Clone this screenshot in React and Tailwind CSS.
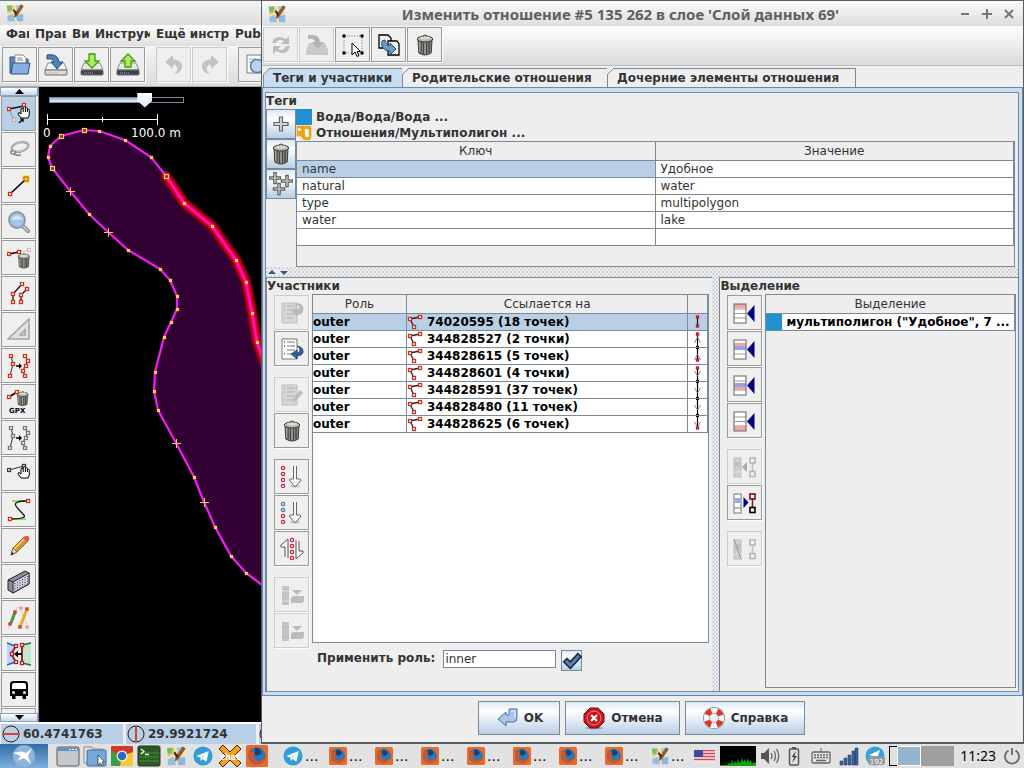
import React, { useState } from "react";
import clsx from "clsx";

// ---------- small drawing helpers ----------

const Node = ({ x, y, c = "#c8321e", s = 3 }) => (
  <rect x={x - s / 2} y={y - s / 2} width={s} height={s} fill="#fff" stroke={c} strokeWidth="1.3" />
);

const Svg = ({ children, size = "size-6" }) => (
  <svg viewBox="0 0 24 24" className={clsx("shrink-0", size)} fill="none" aria-hidden="true">
    {children}
  </svg>
);

const TrashShape = () => (
  <g>
    <path d="M5 6.5 L5.8 20 Q12 24 18.2 20 L19 6.5 Z" fill="#84847c" stroke="#3c3c38" />
    <path d="M8 9 V20 M10.7 9.5 V21 M13.4 9.5 V21 M16 9 V20" stroke="#42423e" strokeWidth="1.2" />
    <path d="M6.8 9 V19 M12 9.5 V21" stroke="#c8c8c0" strokeWidth="0.8" />
    <ellipse cx="12" cy="6" rx="7.7" ry="3" fill="#b9b9b1" stroke="#3c3c38" />
    <ellipse cx="12" cy="4.8" rx="5" ry="1.6" fill="#dcdcd4" />
    <path d="M10 3.5 Q12 0.5 14 3.5" stroke="#4c4c48" strokeWidth="1.2" />
  </g>
);

const HandShape = ({ x = 0, y = 0 }) => (
  <path
    transform={`translate(${x} ${y})`}
    d="M3 12 L0 8 Q0 6 2 7 L3 8 V3 Q4 1 5.2 3 V1.4 Q6.4 -.4 7.4 1.4 V2 Q8.6 .6 9.4 2.4 V3.4 Q11 2.4 11.3 4.2 V9 L10 12 Z M5.2 3 V6 M7.4 2 V6 M9.4 3 V6"
    fill="#fff"
    stroke="#000"
    strokeWidth="1"
  />
);

const TrashIcon = () => (
  <Svg>
    <TrashShape />
  </Svg>
);

const JosmLogo = ({ size = "size-[18px]" }) => (
  <Svg size={size}>
    <path d="M1 2 L22 1 L23 23 L2 23 Z" fill="#ebe6b4" />
    <path d="M1 2 L9 2 L7 9 L2 10 Z" fill="#78be66" />
    <path d="M13 15 L23 13 V23 H15 Z" fill="#8cb8e6" />
    <path d="M2 16 L9 13 L12 23 H2 Z" fill="#94bce8" />
    <path d="M13 2 L20 1 L14 9 Z" fill="#9ecbe9" />
    <path d="M2 12 L11 8 M8 2 L12 13" stroke="#f3b25c" strokeWidth="1.6" />
    <path d="M11 18 L12 13 L20 1 L23 3 L15 15 Z" fill="#a3572a" stroke="#6a3214" strokeWidth="0.7" />
    <path d="M9 8 L11 7 L15 12 L13 15 Z" fill="#3a2c26" />
  </Svg>
);

// ---------- map toolbox icons ----------

const SelectIcon = () => (
  <Svg>
    <path d="M2 7 L17 4" stroke="#111" strokeWidth="1.4" />
    <path d="M2 7 L7 19" stroke="#888" strokeWidth="0.8" />
    <Node x={2} y={7} />
    <Node x={17} y={3} />
    <Node x={7} y={18} c="#d9a5ac" />
    <HandShape x={11} y={4} />
    <path d="M12 21 L16 17 M13 17 H16 V20" stroke="#000" strokeWidth="1.2" />
  </Svg>
);
const LassoIcon = () => (
  <Svg>
    <ellipse cx="13" cy="9" rx="8.5" ry="4.6" transform="rotate(-14 13 9)" stroke="#8b8b88" strokeWidth="2.2" />
    <ellipse cx="13" cy="9" rx="8.5" ry="4.6" transform="rotate(-14 13 9)" stroke="#d4d4d0" strokeWidth="0.8" />
    <path d="M6 12 Q2 14 5 16 Q10 16 8 13 M6 16 Q10 18 14 17" stroke="#8b8b88" strokeWidth="1.6" />
  </Svg>
);
const DrawIcon = () => (
  <Svg>
    <rect x="15" y="1" width="8" height="8" fill="#f7e93c" opacity="0.8" />
    <path d="M3 20 L19 5" stroke="#000" strokeWidth="1.6" />
    <Node x={3} y={20} />
    <rect x="17" y="3" width="4" height="4" fill="#f4d95b" stroke="#b4561e" strokeWidth="1.2" />
  </Svg>
);
const ZoomIcon = () => (
  <Svg>
    <path d="M16 16 L21 21" stroke="#8a8a8a" strokeWidth="4" strokeLinecap="round" />
    <path d="M16 16 L21 21" stroke="#d8d8d8" strokeWidth="1.5" strokeLinecap="round" />
    <circle cx="10" cy="10" r="8" fill="#a3c5ec" stroke="#8e969e" strokeWidth="1.8" />
    <path d="M4 9 Q10 2 16 9 Q10 11 4 9" fill="#d3e4f6" />
  </Svg>
);
const DeleteToolIcon = () => (
  <Svg>
    <path d="M2 8 L12 6" stroke="#000" strokeWidth="1.3" />
    <path d="M12 6 L22 4" stroke="#dcc0c0" />
    <Node x={2} y={8} />
    <Node x={12} y={6} />
    <Node x={22} y={4} c="#e2b5b5" />
    <g transform="translate(8 6) scale(.74)">
      <TrashShape />
    </g>
  </Svg>
);
const ParallelIcon = () => (
  <Svg>
    <path d="M6 20 V12 L15 2 M14 20 V13 L20 7" stroke="#111" strokeWidth="1.3" />
    {[[6, 20], [6, 12], [15, 2], [14, 20], [14, 13], [20, 7]].map(([x, y]) => (
      <Node key={`${x}-${y}`} x={x} y={y} />
    ))}
  </Svg>
);
const AngleIcon = () => (
  <Svg>
    <path d="M1 21 L22 1 V21 Z M13 17 L18 12 V17 Z" stroke="#a6a6a6" strokeWidth="1.6" fill="#e2e2e2" />
  </Svg>
);
const ImproveIcon = ({ c }) => (
  <Svg>
    <path d="M4 2 L6 10 L3 22 M18 2 L21 7 L18 12 L16 17 L18 22" stroke="#333" />
    <path d="M9 12 H14" stroke="#000" strokeWidth="1.5" />
    <path d="M12 9 L15 12 L12 15 Z" fill="#000" />
    {[[4, 2], [6, 10], [3, 22], [18, 2], [21, 7], [19, 12], [16, 17], [18, 22]].map(([x, y]) => (
      <Node key={`${x}-${y}`} x={x} y={y} c={c} />
    ))}
  </Svg>
);
const GpxTrashIcon = () => (
  <Svg>
    <path d="M2 7 L10 2" stroke="#000" strokeWidth="1.8" />
    <g transform="translate(7 0) scale(.72)">
      <TrashShape />
    </g>
    <Node x={2} y={7} />
    <Node x={10} y={2} />
    <text x="2" y="23" className="fill-black font-['DejaVu_Sans'] text-[7px] font-bold">
      GPX
    </text>
  </Svg>
);
const MoveIcon = () => (
  <Svg>
    <path d="M2 8 L17 4" stroke="#333" />
    <Node x={2} y={8} c="#1f4a28" />
    <Node x={17} y={4} c="#1f4a28" />
    <HandShape x={11} y={4} />
  </Svg>
);
const SplineIcon = () => (
  <Svg>
    <path d="M5 3 H20 M3 21 H19" stroke="#6fdd35" strokeWidth="1.6" />
    <path d="M20 3 Q6 3 9 8 Q11 11 16 16 Q22 21 3 21" stroke="#111" strokeWidth="1.3" />
    <Node x={21} y={3} />
    <Node x={3} y={21} />
  </Svg>
);
const PencilIcon = () => (
  <Svg>
    <path d="M4 21 L6 14 L17 3 L21 7 L10 18 Z" fill="#d8962f" stroke="#6e4a14" strokeWidth="0.8" />
    <path d="M7 15 L18 4" stroke="#f4cf79" strokeWidth="1.6" />
    <path d="M16 4 Q19 0 22 3 Q23 6 20 8 Z" fill="#e8583f" />
    <path d="M4 21 L6 14 L10 18 Z" fill="#e9d7b0" stroke="#55534a" strokeWidth="0.7" />
    <path d="M4 21 L5 18 L7 20 Z" fill="#222" />
  </Svg>
);
const BuildingIcon = () => (
  <Svg>
    <path d="M1 10 L18 1 L22 3 V14 L6 23 L1 20 Z" fill="#8d8d93" stroke="#26262a" />
    <path d="M6 12 L22 3 V14 L6 23 Z" fill="#cfd0e0" stroke="#26262a" />
    <path d="M8 13 V21 M10.5 12 V20 M13 10 V19 M15.5 9 V17 M18 7 V16 M20.5 6 V15" stroke="#33333a" strokeDasharray="1 1.5" />
    <path d="M1 10 L6 12" stroke="#26262a" />
  </Svg>
);
const TwoWaysIcon = () => (
  <Svg>
    <path d="M1 23 L10 1 M12 1 L22 23" stroke="#ebc9c9" />
    <path d="M4 17 L8 6" stroke="#3aa03c" strokeWidth="3" />
    <path d="M13 21 L20 3" stroke="#e7ac24" strokeWidth="3" />
    <Node x={3} y={18} s={2} />
    <Node x={8} y={6} s={2} />
    <Node x={13} y={21} s={2} />
    <Node x={20} y={3} s={2} />
    <Node x={20} y={21} s={2} c="#dc9a9a" />
    <Node x={14} y={2} s={2} c="#dc9a9a" />
  </Svg>
);
const SplitIcon = () => (
  <Svg>
    <path d="M0 1 L8 4 L3 12 L8 20 L1 23 H0 Z" fill="#bdd5f4" />
    <path d="M15 3 L24 0 V24 L17 22 Z" fill="#bfe8cf" />
    <path d="M0 1 L8 4 M0 23 L8 20" stroke="#2c55e0" strokeWidth="1.6" />
    <path d="M15 3 L24 1 M15 21 L24 23" stroke="#1c7044" strokeWidth="1.6" />
    <path d="M9 4 L4 12 L9 20 M15 3 V21" stroke="#a3262a" strokeWidth="2" />
    <path d="M8 12 H15" stroke="#000" strokeWidth="1.8" />
    <path d="M11 8.5 L7 12 L11 15.5 Z" fill="#000" />
    {[[9, 4], [5, 12], [9, 20], [15, 3], [15, 21]].map(([x, y]) => (
      <Node key={`${x}-${y}`} x={x} y={y} c="#a3262a" />
    ))}
  </Svg>
);
const BusIcon = () => (
  <Svg>
    <path d="M3 6 Q3 3 7 3 H17 Q21 3 21 6 V18 H3 Z" fill="#000" />
    <path d="M5 7 Q5 5 7 5 H17 Q19 5 19 7 V11 H5 Z" fill="#fff" />
    <rect x="5" y="17" width="3.5" height="4" fill="#000" />
    <rect x="15.5" y="17" width="3.5" height="4" fill="#000" />
    <circle cx="6.5" cy="14.5" r="1.5" fill="#fff" />
    <circle cx="17.5" cy="14.5" r="1.5" fill="#fff" />
  </Svg>
);

// ---------- file toolbar icons ----------

const OpenIcon = () => (
  <Svg>
    <path d="M2 4 H9 L10 6 H20 V20 H2 Z" fill="#5a86bd" stroke="#2d5587" />
    <path d="M7 2 H15 L18 5 V14 H7 Z" fill="#fff" stroke="#888" />
    <path d="M9 5 H14 M9 7 H15" stroke="#888" />
    <path d="M5 10 H22 L20 21 H3 Z" fill="#86b0e0" stroke="#2d5587" />
  </Svg>
);
const DriveShape = ({ dark }) => (
  <g>
    <path d="M4 10 H20 L23 17 H1 Z" fill={dark ? "#e6e6e6" : "#f4f4f4"} stroke="#8a8a8a" />
    <rect x="1" y="17" width="22" height="5" rx="1" fill={dark ? "#3e4244" : "#d9d9d9"} stroke="#6b6b6b" />
    <path d="M4 20 H13" stroke="#aaa" strokeDasharray="1 1" />
  </g>
);
const SaveIcon = () => (
  <Svg>
    <DriveShape />
    <path d="M3 2 Q14 0 15 9 H19 L13 16 L7 9 H10 Q9 5 3 6 Z" fill="#4c83b8" stroke="#1f4e80" />
  </Svg>
);
const DownloadIcon = () => (
  <Svg>
    <DriveShape dark />
    <path d="M9 1 H15 V8 H19 L12 15 L5 8 H9 Z" fill="#a9ee5c" stroke="#469a0b" strokeWidth="1.3" />
  </Svg>
);
const UploadIcon = () => (
  <Svg>
    <DriveShape dark />
    <path d="M9 14 H15 V8 H19 L12 1 L5 8 H9 Z" fill="#a9ee5c" stroke="#469a0b" strokeWidth="1.3" />
  </Svg>
);
const UndoIcon = ({ flip }) => (
  <Svg>
    <path
      transform={flip ? "translate(24 0) scale(-1 1)" : undefined}
      d="M3 9 L11 2 V6 Q20 7 20 14 Q19 20 12 21 Q17 17 15 14 Q13 11 11 12 V16 Z"
      fill="#c3c3c3"
    />
  </Svg>
);
const PageZoomIcon = () => (
  <Svg>
    <path d="M3 2 H17 V20 H3 Z" fill="#fff" stroke="#777" />
    <path d="M5 6 H12 M5 9 H10" stroke="#999" />
    <circle cx="13" cy="13" r="6.5" fill="#b9d2ee" stroke="#587fa9" strokeWidth="1.5" />
  </Svg>
);

// ---------- relation editor icons ----------

const RefreshIcon = () => (
  <Svg>
    <path d="M3 10 Q5 3 12 4 L17 6 L20 3 V11 H12 L15 8 Q9 5 7 10 Z M21 13 Q19 21 12 20 L7 18 L4 21 V13 H12 L9 16 Q14 19 17 13 Z" fill="#bcbcbc" />
  </Svg>
);
const ApplyIcon = () => (
  <Svg>
    <path d="M4 10 H20 L23 17 V22 H1 V17 Z" fill="#c9c9c9" />
    <path d="M3 2 Q14 0 15 9 H19 L13 16 L7 9 H10 Q9 5 3 6 Z" fill="#b4b4b4" />
  </Svg>
);
const SelectBoxIcon = () => (
  <Svg>
    <path d="M3 3 H21 V20 H3 Z" stroke="#777" strokeDasharray="1 1.5" />
    {[[3, 3], [21, 3], [3, 20], [21, 20]].map(([x, y]) => (
      <rect key={`${x}-${y}`} x={x - 1.5} y={y - 1.5} width="3" height="3" fill="#000" />
    ))}
    <path d="M11 10 V22 L14 19 L16 23.5 L18 22.5 L16 18.5 H19.5 Z" fill="#fff" stroke="#000" />
  </Svg>
);
const CopyIcon = () => (
  <Svg>
    <path d="M2 2 H11 L14 5 V15 H2 Z" fill="#eee" stroke="#000" strokeWidth="1.3" />
    <path d="M11 8 H20 L22 11 V22 H11 Z" fill="#f5f5f5" stroke="#000" strokeWidth="1.3" />
    <path d="M5 8 Q3 17 13 18 V22 L19 16 L13 10 V13 Q9 13 8 7 Z" fill="#6f9dcb" stroke="#27486e" />
  </Svg>
);
const PlusShape = ({ x, y, s = 1 }) => (
  <path
    transform={`translate(${x} ${y}) scale(${s})`}
    d="M-1.5 -7 H1.5 V-1.5 H7 V1.5 H1.5 V7 H-1.5 V1.5 H-7 V-1.5 H-1.5 Z"
    fill="#d6d8d2"
    stroke="#5f625e"
    strokeWidth={1.2 / s}
  />
);
const AddTagIcon = () => (
  <Svg>
    <PlusShape x={12} y={12} s={1} />
  </Svg>
);
const PasteTagsIcon = () => (
  <Svg>
    <PlusShape x={6} y={6} s={0.8} />
    <PlusShape x={18} y={9} s={0.8} />
    <PlusShape x={10} y={17} s={0.8} />
  </Svg>
);
const MultipolygonIcon = () => (
  <Svg size="size-4">
    <path d="M1 1 H20 Q23 1 23 4 V20 L20 23 H12 L7 17 H1 Z" fill="#eda413" />
    <path d="M13 7 Q16 4 19 7 V18 H14 Z M3 5 H7 V9 H3 Z" fill="#fff" />
  </Svg>
);

const SheetIcon = ({ active, edit }) => (
  <Svg>
    <path d="M2 2 H17 V22 H2 Z" fill={active ? "#fff" : "#d6d6d6"} stroke={active ? "#777" : "#c0c0c0"} />
    <path d="M7 5 H15 M7 9 H15 M7 13 H15 M7 17 H13" stroke={active ? "#777" : "#b4b4b4"} />
    <path d="M4 5 H5 M4 9 H5 M4 17 H5" stroke={active ? "#d22" : "#b4b4b4"} strokeWidth="1.6" />
    {edit && <path d="M12 17 L20 7 L23 10 L15 19 Z" fill="#bdbdbd" />}
    {!edit && !active && <path d="M12 10 L17 5 V8 Q20 9 19 5 L14 3 Q22 0 23.500 8 Q23 14 17 14 V16 Z" fill="#bababa" />}
    {active && <path d="M17 9 Q24 10 23 16 Q21 19 17 19 V22 L11 17 L17 13 V16 Q20 16 20 13 Q20 10 17 9 Z" fill="#2f5f9d" stroke="#173a6c" strokeWidth="0.7" />}
  </Svg>
);

const Dots = ({ x, colors }) =>
  colors.map((c, i) => <circle key={i} cx={x} cy={3 + i * 6} r="1.6" stroke={c} strokeWidth="1.3" fill="#fff" />);
const RED = "#d0213c";
const BLUE = "#4a72b0";

const SortIcon = ({ colors }) => (
  <Svg>
    <Dots x={3} colors={colors} />
    <ellipse cx="15" cy="21" rx="5" ry="1.500" fill="#ccc" />
    <path d="M13.500 1 V14 H10.500 Q8.500 14 10 16 L15 22 L20.500 16 Q21.500 14 19.500 14 H16.500 V1" fill="#f6f6f6" stroke="#666" />
  </Svg>
);
const ReverseIcon = () => (
  <Svg>
    <Dots x={12} colors={[RED, RED, RED, RED]} />
    <path d="M8 21 V2 L1 8 Q0 11 4 10 H5 V20" fill="#f6f6f6" stroke="#555" />
    <path d="M16 3 V22 L23 16 Q24 13 21 14 H19 V4" fill="#f6f6f6" stroke="#555" />
  </Svg>
);
const DownloadMemberIcon = ({ solid }) => (
  <Svg>
    <rect x="2" y="3" width="7" height="19" fill="#c4c4c4" />
    <path d="M2 8 H9 M2 18 H9" stroke={solid ? "#b4b4b4" : "#dedede"} />
    <path d="M12 7 H22 L17 12 Z M13 13 H24 V18 L22 20 H11 V15 Z" fill="#bcbcbc" />
  </Svg>
);

const INSERT_BANDS = {
  top: [[3, 4, "#f3a5a5"]],
  before: [[6, 3, "#f3a5a5"], [9, 4, "#98a2e6"]],
  after: [[10, 4, "#98a2e6"], [14, 3, "#f3a5a5"]],
  bottom: [[17, 5, "#f3a5a5"]],
};
const InsertIcon = ({ kind }) => (
  <Svg>
    <rect x="1" y="3" width="12" height="19" fill="#fff" />
    <path d="M1 8 H13 M1 12.500 H13 M1 17 H13" stroke="#999" />
    {INSERT_BANDS[kind].map(([y, h, c]) => (
      <rect key={y} x="1" y={y} width="12" height={h} fill={c} />
    ))}
    <rect x="1" y="3" width="12" height="19" stroke="#666" />
    <path d="M14 12.500 L21.500 4 V21 Z" fill="#00007f" />
  </Svg>
);
const ChainIcon = ({ active, strike, toLeft }) => (
  <Svg>
    <rect x="1" y="3" width="7" height="19" fill={active ? "#fff" : "#cfcfcf"} stroke={active ? "#777" : "#bdbdbd"} />
    <rect x="1.5" y="7" width="6" height="5" fill={active ? "#8fa8f0" : "#c0c0c0"} />
    <path d="M1 17 H8" stroke={active ? "#777" : "#dedede"} />
    {toLeft && <path d="M9 12 L14 7 V17 Z" fill="#aaa" />}
    {active && <path d="M10.500 6 L15.500 11.500 L10.500 17 Z" fill="#00007f" />}
    {strike && <path d="M1 2 L8 22" stroke="#999" />}
    <path d="M19.500 8 V17" stroke={active ? "#9a1420" : "#c2c2c2"} strokeWidth="1.6" />
    <rect x="17" y="3" width="5" height="5" fill="#f4f4f4" stroke={active ? "#7a0c14" : "#b6b6b6"} strokeWidth="1.6" />
    <rect x="17" y="16.500" width="5" height="5" fill="#f4f4f4" stroke={active ? "#000" : "#b6b6b6"} strokeWidth="1.6" />
  </Svg>
);
const WayIcon = () => (
  <svg viewBox="0 0 16 16" className="size-4 shrink-0" fill="none" aria-hidden="true">
    <path d="M3 5 L13 3 M3 5 L7 13" stroke="#222" strokeWidth="1.300" />
    <Node x={3} y={5} />
    <Node x={13} y={3} />
    <Node x={7} y={13} />
  </svg>
);

// connection of a member way to its neighbours
const LinkIcon = ({ start, end, dir }) => (
  <svg viewBox="0 0 19 16" className="h-4 w-[19px]" fill="none" aria-hidden="true">
    <path d={`M9.500 ${start ? 3 : 0} V${end ? 12 : 16}`} stroke="#000" strokeWidth="1.2" />
    {dir === "up" && <path d="M6.500 12 L9.500 6 L12.500 12" stroke="#888" />}
    {dir === "down" && <path d="M6.500 6 L9.500 11 L12.500 6" stroke="#888" />}
    {start ? <Node x={9.5} y={3} c="#c8141e" s={2} /> : <path d="M8 .5 H11" stroke="#000" />}
    {end ? <Node x={9.5} y={12} c="#c8141e" s={2} /> : <path d="M8 15.500 H11" stroke="#000" />}
  </svg>
);

const OkIcon = () => (
  <Svg>
    <path d="M3 13 L11 6 V9 H14 V3 H22 V12 Q22 16 18 16 H11 V20 Z" fill="#a8c4e6" stroke="#4a709f" />
    <path d="M16 5 H20 V12" stroke="#d9e7f8" strokeWidth="1.5" />
  </Svg>
);
const CancelIcon = () => (
  <Svg>
    <ellipse cx="12" cy="22" rx="9" ry="1.500" fill="#9aa6b4" />
    <path d="M8 2 H16 L22 8 V16 L16 22 H8 L2 16 V8 Z" fill="#c7161d" stroke="#7d0a0e" />
    <circle cx="12" cy="12" r="7" stroke="#e88" />
    <path d="M9 9 L15 15 M15 9 L9 15" stroke="#fff" strokeWidth="2.200" />
  </Svg>
);
const HelpIcon = () => (
  <Svg>
    <circle cx="12" cy="12" r="7.500" stroke="#8e8e8e" strokeWidth="7" />
    <circle cx="12" cy="12" r="7.500" stroke="#f6f6f6" strokeWidth="5.500" />
    <circle cx="12" cy="12" r="7.500" stroke="#e0352b" strokeWidth="5.500" strokeDasharray="5.890 5.890" strokeDashoffset="-2.945" />
  </Svg>
);
const CheckIcon = () => (
  <Svg size="size-5">
    <path d="M2 13 L6 9 L10 13 L19 3 L23 7 L10 21 Z" fill="#5b7fae" stroke="#10203c" strokeWidth="1.8" />
  </Svg>
);

// ---------- taskbar icons ----------

const FirefoxIcon = ({ size = "size-[18px]" }) => (
  <Svg size={size}>
    <rect width="24" height="24" rx="2" fill="#ea6a2a" />
    <circle cx="12" cy="12" r="9.500" fill="#2f78b8" />
    <path d="M3 5 Q2 20 12 21.500 Q22 21 22 10 Q20 17 14 18 Q7 17 8 11 L11 9 L6 7 Q5 5 6 3 Z" fill="#d9541c" />
    <path d="M10 3 Q16 3 17 9 L13 12 L9 10 Z" fill="#1c3f78" />
  </Svg>
);
const TelegramIcon = () => (
  <Svg size="size-5">
    <circle cx="12" cy="12" r="11.500" fill="#2f9fd6" />
    <path d="M4 12 L19 6 L16 19 L11.500 15.500 L9.500 18 L9 14 Z" fill="#fff" />
    <path d="M9 14 L16 8.500 L11 15" fill="#bcdcef" />
  </Svg>
);
const WindowIcon = () => (
  <Svg size="size-6">
    <rect x="1" y="3" width="22" height="19" rx="1.500" fill="#c6c9cc" stroke="#55595c" />
    <rect x="2" y="4" width="20" height="3" fill="#5f93c6" />
    <path d="M13 5.500 H21" stroke="#fff" strokeDasharray="2 1" />
  </Svg>
);
const FilesIcon = () => (
  <Svg size="size-6">
    <path d="M1 3 H9 L10 5 H20 V19 H1 Z" fill="#e8e8e8" stroke="#888" />
    <rect x="4" y="6" width="19" height="16" rx="1" fill="#76a9d8" stroke="#3e6d9c" />
    <path d="M15 11 V21 L17.500 19 L19 22 L20.500 21 L19 18 H21.500 Z" fill="#fff" stroke="#333" strokeWidth="0.8" />
  </Svg>
);
const ChromeIcon = () => (
  <Svg size="size-6">
    <rect x="1" y="2" width="22" height="20" rx="1" fill="#cf3a2c" />
    <path d="M1 6 L12 14 L10 22 H1 Z" fill="#3d9a46" />
    <path d="M12 12 L23 8 V22 H10 Z" fill="#f3cb30" />
    <circle cx="12" cy="12" r="5.500" fill="#f2f2f2" />
    <circle cx="12" cy="12" r="4.300" fill="#2b6cb8" />
  </Svg>
);
const TerminalIcon = () => (
  <Svg size="size-6">
    <rect x="1" y="2" width="22" height="20" rx="1.500" fill="#2c5a22" stroke="#26331f" />
    <path d="M2 9 H22 M2 13 H22 M2 17 H22" stroke="#4a8a38" />
    <path d="M4 5 L7 7.500 L4 10 M8 10.500 H12" stroke="#e6ffe0" strokeWidth="1.300" />
  </Svg>
);
const ChatIcon = () => (
  <Svg size="size-6">
    <path d="M1 5 L5 1 L12 8 L19 1 L23 5 L16 12 L23 19 L19 23 L12 16 L5 23 L1 19 L8 12 Z" fill="#f5a21b" stroke="#42240a" />
    <text x="12" y="16" textAnchor="middle" className="fill-white font-['DejaVu_Sans'] text-[8px] font-bold">
      chat
    </text>
  </Svg>
);

// ---------- data ----------

const menuItems = [
  { label: "Фай", width: "w-[23px]" },
  { label: "Прав", width: "w-[31px]" },
  { label: "Ви", width: "w-[17px]" },
  { label: "Инструм", width: "w-[55px]" },
  { label: "Ещё инстр", width: "w-[73px]" },
  { label: "Pub", width: "w-[27px]" },
];

const mapTools = [
  { name: "Выделить", icon: <SelectIcon />, active: true },
  { name: "Лассо", icon: <LassoIcon /> },
  { name: "Рисовать", icon: <DrawIcon /> },
  { name: "Масштаб", icon: <ZoomIcon /> },
  { name: "Удалить", icon: <DeleteToolIcon /> },
  { name: "Параллель", icon: <ParallelIcon /> },
  { name: "Угол", icon: <AngleIcon /> },
  { name: "Улучшить линию", icon: <ImproveIcon c="#c8321e" /> },
  { name: "Удалить GPX", icon: <GpxTrashIcon /> },
  { name: "Улучшить точность", icon: <ImproveIcon c="#777" /> },
  { name: "Переместить", icon: <MoveIcon /> },
  { name: "Сплайн", icon: <SplineIcon /> },
  { name: "Карандаш", icon: <PencilIcon /> },
  { name: "Здания", icon: <BuildingIcon /> },
  { name: "Дороги", icon: <TwoWaysIcon /> },
  { name: "Разделить", icon: <SplitIcon /> },
  { name: "Автобус", icon: <BusIcon /> },
  { name: "Ещё", icon: null },
];

const tabs = [
  { label: "Теги и участники", width: "w-[140px]" },
  { label: "Родительские отношения", width: "w-[206px]" },
  { label: "Дочерние элементы отношения", width: "w-[249px]" },
];

const tags = [
  ["name", "Удобное"],
  ["natural", "water"],
  ["type", "multipolygon"],
  ["water", "lake"],
  ["", ""],
];

const members = [
  { ref: "74020595 (18 точек)", link: { start: true, end: true } },
  { ref: "344828527 (2 точки)", link: { start: true, dir: "up" } },
  { ref: "344828615 (5 точек)", link: { end: true, dir: "up" } },
  { ref: "344828601 (4 точки)", link: { start: true, dir: "down" } },
  { ref: "344828591 (37 точек)", link: { dir: "down" } },
  { ref: "344828480 (11 точек)", link: { dir: "down" } },
  { ref: "344828625 (6 точек)", link: { end: true, dir: "down" } },
];

const memberActions = [
  [
    { name: "Загрузить список", icon: <SheetIcon />, disabled: true },
    { name: "Обновить список", icon: <SheetIcon active /> },
  ],
  [
    { name: "Правка участника", icon: <SheetIcon edit />, disabled: true },
    { name: "Удалить участника", icon: <TrashIcon /> },
  ],
  [
    { name: "Сортировать", icon: <SortIcon colors={[RED, RED, RED, RED]} /> },
    { name: "Сортировать ниже", icon: <SortIcon colors={[BLUE, BLUE, RED, RED]} /> },
    { name: "Обратный порядок", icon: <ReverseIcon /> },
  ],
  [
    { name: "Скачать участников", icon: <DownloadMemberIcon />, disabled: true },
    { name: "Скачать выделенных", icon: <DownloadMemberIcon solid />, disabled: true },
  ],
];

const selectionActions = [
  [
    { name: "Вставить в начало", icon: <InsertIcon kind="top" /> },
    { name: "Вставить перед", icon: <InsertIcon kind="before" /> },
    { name: "Вставить после", icon: <InsertIcon kind="after" /> },
    { name: "Вставить в конец", icon: <InsertIcon kind="bottom" /> },
  ],
  [
    { name: "Выделить участников", icon: <ChainIcon toLeft />, disabled: true },
    { name: "Выделить объекты", icon: <ChainIcon active /> },
  ],
  [{ name: "Убрать выделенное", icon: <ChainIcon strike />, disabled: true }],
];

// [x, y, kind]
const outlinePoints = [
  [166, 176, "big"], [151, 157], [125, 140], [99, 131], [84, 130, "big"], [61, 136, "big"],
  [50, 146], [48, 157], [52, 168, "big"], [70, 191, "plus"], [89, 214], [108, 232, "plus"],
  [128, 250], [160, 269], [170, 280], [177, 296], [177, 309], [171, 322], [164, 337],
  [155, 372], [154, 391], [158, 410], [176, 443, "plus"], [194, 477], [204, 502, "plus"],
  [215, 527], [231, 556], [246, 573],
];
const selectedPoints = [
  [184, 203], [212, 226], [236, 260], [246, 282], [252, 313], [257, 342],
];

const toPath = (points) => "M" + points.map(([x, y]) => `${x} ${y}`).join(" L");

// ---------- shared controls ----------

const ToolButton = ({ name, icon, disabled, active }) => (
  <button
    type="button"
    aria-label={name}
    disabled={disabled}
    className={clsx(
      "flex size-[35px] shrink-0 items-center justify-center border shadow-[1px_1px_0_#fff]",
      disabled ? "border-[#cdcdcd] bg-[#ececec]" : "border-[#999]",
      active ? "bg-[#b8cfe5]" : "bg-[#efefef]"
    )}
  >
    {icon}
  </button>
);

const ButtonColumn = ({ groups }) => (
  <div className="flex shrink-0 flex-col gap-[11px] pt-px">
    {groups.map((group, i) => (
      <div key={i} className="flex flex-col gap-px">
        {group.map((b) => (
          <ToolButton key={b.name} {...b} />
        ))}
      </div>
    ))}
  </div>
);

const thClass = "h-[19px] border-b border-r border-[#7a8a99] bg-[#eee] p-0 text-center font-normal text-[#333]";
const metalButton = "border border-[#7a8a99] bg-linear-to-b from-[#dde8f3] via-white via-30% to-[#b8cfe5]";

const Tab = ({ label, width, selected, onClick }) => (
  <button
    type="button"
    role="tab"
    aria-selected={selected}
    onClick={onClick}
    className={clsx(
      "relative h-[19px] border-t border-r border-l border-[#7a8a99] pl-[9px] text-left font-bold whitespace-nowrap text-[#333] not-first:-ml-px",
      width,
      selected ? "bg-[#c8ddf2]" : "bg-[#eee]"
    )}
  >
    <svg viewBox="0 0 7 7" className="absolute -top-px -left-px size-[7px]" aria-hidden="true">
      <path d="M0 0 H7 L0 7 Z" fill="#eee" />
      <path d="M0 7 L7 0" stroke="#7a8a99" />
    </svg>
    {label}
  </button>
);

// ---------- main window ----------

const MapView = () => {
  const [scale, setScale] = useState(74);

  return (
    <div className="relative min-w-0 flex-1 bg-black">
      <svg viewBox="39 87 222 635" preserveAspectRatio="xMinYMin slice" className="absolute inset-0 size-full" fill="none" role="img" aria-label="Карта">
        <path d={`${toPath([...selectedPoints].reverse())} L${toPath(outlinePoints).slice(1)} L262 585 V360 Z`} fill="#330033" />
        <g strokeLinejoin="round" strokeLinecap="round">
          <path d={`${toPath([outlinePoints[0], ...selectedPoints])} L264 362`} stroke="#6c0010" strokeWidth="11" />
          <path d={`${toPath([outlinePoints[0], ...selectedPoints])} L264 362`} stroke="#c00018" strokeWidth="8" />
          <path d={`${toPath([outlinePoints[0], ...selectedPoints])} L264 362`} stroke="#ff0058" strokeWidth="4" />
        </g>
        <path d={`${toPath(outlinePoints)} L262 585`} stroke="#f31bf3" strokeWidth="2.200" />
        <path d={`${toPath([outlinePoints[0], ...selectedPoints])} L264 362`} stroke="#ff14c8" strokeWidth="2" />
        {[...outlinePoints, ...selectedPoints].map(([x, y, kind]) => {
          if (kind === "plus") {
            return <path key={`${x}-${y}`} d={`M${x - 4} ${y + 0.5} H${x + 5} M${x + 0.5} ${y - 4} V${y + 5}`} stroke="#ffc85a" />;
          }
          const r = kind === "big" ? 2 : 1;
          return (
            <rect key={`${x}-${y}`} x={x - r + 0.5} y={y - r + 0.5} width={r * 2} height={r * 2} fill={kind === "big" ? "#8a2a50" : "#c03030"} stroke="#ffd84a" strokeWidth="1.200" />
          );
        })}
        <path d="M47.500 114 V125 M47 119.500 H158 M157.500 114 V125 M102.500 117 V122" stroke="#fff" />
        <text x="43" y="137" className="fill-white font-['DejaVu_Sans'] text-[12px]">
          0
        </text>
        <text x="131" y="137" className="fill-white font-['DejaVu_Sans'] text-[12px]">
          100.0 m
        </text>
      </svg>
      <input
        type="range"
        aria-label="Масштаб карты"
        value={scale}
        onChange={(e) => setScale(e.target.value)}
        style={{ backgroundSize: `${scale}% 100%` }}
        className="absolute top-[10px] left-[10px] h-[6px] w-[135px] appearance-none border border-[#7a8a99] bg-black bg-[linear-gradient(#8fb0d8,#eef4fb)] bg-no-repeat [&::-webkit-slider-thumb]:h-[15px] [&::-webkit-slider-thumb]:w-[15px] [&::-webkit-slider-thumb]:appearance-none [&::-webkit-slider-thumb]:bg-[linear-gradient(#fff,#dce8f5)] [&::-webkit-slider-thumb]:[clip-path:polygon(0_0,100%_0,100%_55%,50%_100%,0_55%)]"
      />
    </div>
  );
};

const ScrollArrow = ({ down }) => (
  <button type="button" aria-label={down ? "Вниз" : "Вверх"} className="flex h-[9px] w-full shrink-0 items-center justify-center border border-[#8fa3b8] bg-linear-to-b from-white to-[#c3d6ea]">
    <svg viewBox="0 0 9 5" className={clsx("h-[5px] w-[9px]", down && "rotate-180")} aria-hidden="true">
      <path d="M0 5 L4.500 0 L9 5 Z" fill="#000" />
    </svg>
  </button>
);

const MainWindow = () => (
  <section className="flex w-[261px] shrink-0 flex-col overflow-hidden border-t border-[#777] bg-[#eee]">
    <header className="flex h-6 items-center bg-linear-to-b from-[#f2f2f2] to-[#dedede] px-[6px]">
      <JosmLogo />
    </header>
    <nav className="flex h-[21px] items-start gap-[6px] bg-linear-to-b from-white to-[#dfdfdf] pt-px pl-[6px]">
      {menuItems.map((item) => (
        <button key={item.label} type="button" className={clsx("shrink-0 overflow-hidden text-left font-bold whitespace-nowrap text-[#333]", item.width)}>
          {item.label}
        </button>
      ))}
    </nav>
    <div className="flex h-[41px] gap-px border-b border-[#aaa] bg-linear-to-b from-[#f5f5f5] to-[#dcdcdc] pt-px pl-[2px]">
      <ToolButton name="Открыть" icon={<OpenIcon />} />
      <ToolButton name="Сохранить" icon={<SaveIcon />} />
      <ToolButton name="Скачать" icon={<DownloadIcon />} />
      <ToolButton name="Отправить" icon={<UploadIcon />} />
      <div className="ml-[10px] flex gap-px">
        <ToolButton name="Отменить" icon={<UndoIcon />} disabled />
        <ToolButton name="Вернуть" icon={<UndoIcon flip />} disabled />
      </div>
      <div className="ml-[10px] flex">
        <ToolButton name="Найти" icon={<PageZoomIcon />} />
      </div>
    </div>
    <div className="flex flex-1">
      <div className="flex w-[39px] shrink-0 flex-col border-r border-[#888] bg-[#eee]">
        <ScrollArrow />
        <div className="flex h-0 grow flex-col gap-px overflow-hidden pl-px">
          {mapTools.map((t) => (
            <ToolButton key={t.name} {...t} />
          ))}
        </div>
        <ScrollArrow down />
      </div>
      <MapView />
    </div>
    <footer className="flex h-[22px] shrink-0 gap-[3px] border-t-2 border-white bg-[#eee] pl-px text-[#333]">
      <div className="flex w-[122px] shrink-0 items-center gap-[3px] bg-[#b8cfe5] pl-px">
        <svg viewBox="0 0 18 18" className="size-[18px]" fill="none" aria-hidden="true">
          <circle cx="9" cy="9" r="8" stroke="#222" />
          <path d="M1 9 H17" stroke="#d8432f" strokeWidth="2" />
        </svg>
        <span className="font-bold">60.4741763</span>
      </div>
      <div className="flex w-[130px] shrink-0 items-center gap-[3px] bg-[#b8cfe5] pl-px">
        <svg viewBox="0 0 18 18" className="size-[18px]" fill="none" aria-hidden="true">
          <circle cx="9" cy="9" r="8" stroke="#222" />
          <path d="M9 1 V17" stroke="#d8432f" strokeWidth="2" />
        </svg>
        <span className="font-bold">29.9921724</span>
      </div>
      <div className="flex w-[122px] shrink-0 items-center bg-[#b8cfe5]">
        <svg viewBox="0 0 18 18" className="size-[18px]" fill="none" aria-hidden="true">
          <circle cx="9" cy="9" r="8" stroke="#222" />
        </svg>
      </div>
    </footer>
  </section>
);

// ---------- relation editor ----------

const TagsPanel = () => (
  <div className="flex flex-col border-t border-[#7a8a99]">
    <h2 className="h-4 leading-4 font-bold">Теги</h2>
    <div className="flex h-[158px] pr-[3px]">
      <div className="flex w-[30px] shrink-0 flex-col">
        <button type="button" aria-label="Добавить тег" className={clsx("flex size-[30px] items-center justify-center", metalButton)}>
          <AddTagIcon />
        </button>
        <button type="button" aria-label="Удалить тег" className={clsx("flex size-[30px] items-center justify-center", metalButton)}>
          <TrashIcon />
        </button>
        <button type="button" aria-label="Вставить теги" className={clsx("flex size-[30px] items-center justify-center", metalButton)}>
          <PasteTagsIcon />
        </button>
      </div>
      <div className="flex min-w-0 flex-1 flex-col">
        <a href="#water" className="flex h-4 items-center gap-1 font-bold">
          <span className="size-4 bg-[#2090d0]" />
          Вода/Вода/Вода ...
        </a>
        <a href="#multipolygon" className="flex h-4 items-center gap-1 font-bold">
          <MultipolygonIcon />
          Отношения/Мультиполигон ...
        </a>
        <div className="flex-1 border border-[#7a8a99]">
          <table className="w-full table-fixed border-separate border-spacing-0">
            <thead>
              <tr>
                <th className={thClass}>Ключ</th>
                <th className={thClass}>Значение</th>
              </tr>
            </thead>
            <tbody>
              {tags.map(([key, value], i) => (
                <tr key={i}>
                  <td className={clsx("h-[17px] border-r border-b border-[#7a8a99] py-0 pr-0 pl-[5px]", i === 0 ? "bg-[#b8cfe5]" : "bg-white")}>{key}</td>
                  <td className="h-[17px] border-r border-b border-[#7a8a99] bg-white py-0 pr-0 pl-[5px]">{value}</td>
                </tr>
              ))}
            </tbody>
          </table>
        </div>
      </div>
    </div>
  </div>
);

const dots =
  "bg-[radial-gradient(circle_at_1px_1px,#8c9aa9_0px,transparent_1px),radial-gradient(circle_at_3px_3px,#8c9aa9_0px,transparent_1px)] bg-[length:4px_4px]";

const MembersPanel = () => {
  const [role, setRole] = useState("inner");

  return (
    <div className="flex min-w-0 flex-[446] flex-col border-t border-l border-[#7a8a99]">
      <h2 className="h-4 leading-4 font-bold">Участники</h2>
      <div className="flex flex-1 gap-[3px] pr-[3px] pl-[7px]">
        <ButtonColumn groups={memberActions} />
        <div className="flex min-w-0 flex-1 flex-col">
          <div className="flex-1 border border-[#7a8a99] bg-white">
            <table className="w-full table-fixed border-separate border-spacing-0">
              <thead>
                <tr>
                  <th className={clsx(thClass, "w-[94px]")}>Роль</th>
                  <th className={thClass}>Ссылается на</th>
                  <th aria-label="Связь" className={clsx(thClass, "w-5")} />
                </tr>
              </thead>
              <tbody className="font-bold text-black">
                {members.map((m, i) => (
                  <tr key={m.ref} className={i === 0 ? "bg-[#b8cfe5]" : "bg-white"}>
                    <td className="h-[17px] border-r border-b border-[#7a8a99] p-0">outer</td>
                    <td className="h-[17px] border-r border-b border-[#7a8a99] p-0">
                      <div className="flex h-4 items-center gap-1">
                        <WayIcon />
                        {m.ref}
                      </div>
                    </td>
                    <td className="h-[17px] border-r border-b border-[#7a8a99] p-0">
                      <LinkIcon {...m.link} />
                    </td>
                  </tr>
                ))}
              </tbody>
            </table>
          </div>
          <div className="flex h-12 items-start pt-[7px] pl-[5px]">
            <label htmlFor="role" className="mr-2 leading-4 font-bold whitespace-nowrap">
              Применить роль:
            </label>
            <input
              id="role"
              type="text"
              value={role}
              onChange={(e) => setRole(e.target.value)}
              className="h-[18px] w-[113px] border border-[#7a8a99] bg-white px-px outline-none"
            />
            <button type="button" aria-label="Применить" className={clsx("ml-[5px] flex size-[21px] items-center justify-center", metalButton)}>
              <CheckIcon />
            </button>
          </div>
        </div>
      </div>
    </div>
  );
};

const SelectionPanel = () => (
  <div className="flex min-w-0 flex-[298] flex-col border-t border-l border-[#7a8a99]">
    <h2 className="h-4 leading-4 font-bold">Выделение</h2>
    <div className="flex flex-1 gap-[3px] pr-[2px] pb-[3px] pl-[7px]">
      <ButtonColumn groups={selectionActions} />
      <div className="min-w-0 flex-1 border border-[#7a8a99] bg-[#eee]">
        <table className="w-full table-fixed border-separate border-spacing-0">
          <thead>
            <tr>
              <th className={thClass}>Выделение</th>
            </tr>
          </thead>
          <tbody>
            <tr>
              <td className="h-[17px] border-r border-b border-[#7a8a99] bg-white p-0">
                <div className="flex h-4 items-center gap-1 overflow-hidden font-bold whitespace-nowrap text-black">
                  <span className="size-4 shrink-0 bg-[#2090d0]" />
                  мультиполигон ("Удобное", 7 ...
                </div>
              </td>
            </tr>
          </tbody>
        </table>
      </div>
    </div>
  </div>
);

const RelationEditor = () => {
  const [tab, setTab] = useState(0);

  return (
    <section className="flex min-w-0 flex-1 flex-col border border-b-2 border-[#555d66] bg-[#eee] text-[#333]">
      <header className="flex h-[25px] shrink-0 items-center bg-linear-to-b from-[#fafafa] to-[#dedede] px-[6px]">
        <JosmLogo />
        <h1 className="flex-1 pr-1 text-center font-['Noto_Sans'] text-[15px] leading-5 font-bold text-[#606060]">
          Изменить отношение #5 135 262 в слое 'Слой данных 69'
        </h1>
        <div className="flex gap-[10px] pr-[2px] text-[#777]">
          {[
            ["Свернуть", "M2 6 H10"],
            ["Развернуть", "M1 6 H11 M6 1 V11"],
            ["Закрыть", "M2 2 L10 10 M10 2 L2 10"],
          ].map(([name, d]) => (
            <button key={name} type="button" aria-label={name}>
              <svg viewBox="0 0 12 12" className="size-3" fill="none" stroke="currentColor" strokeWidth="2" aria-hidden="true">
                <path d={d} />
              </svg>
            </button>
          ))}
        </div>
      </header>
      <div className="flex h-10 shrink-0 gap-px border-b border-[#bbb] bg-linear-to-b from-white to-[#dadada] pt-px pl-px">
        <ToolButton name="Обновить" icon={<RefreshIcon />} disabled />
        <ToolButton name="Применить изменения" icon={<ApplyIcon />} disabled />
        <ToolButton name="Выделить отношение" icon={<SelectBoxIcon />} />
        <ToolButton name="Дублировать" icon={<CopyIcon />} />
        <ToolButton name="Удалить отношение" icon={<TrashIcon />} />
      </div>

      <div role="tablist" className="flex pt-[2px] pl-px">
        {tabs.map((t, i) => (
          <Tab key={t.label} {...t} selected={tab === i} onClick={() => setTab(i)} />
        ))}
      </div>
      <div role="tabpanel" className="flex flex-1 flex-col border border-[#6f87a8] bg-[#c8ddf2] p-[3px] pt-[4px] pl-[2px]">
        <div className="flex flex-1 flex-col border border-t-0 border-[#7a8a99] bg-[#eee]">
          <TagsPanel />
          <div className={clsx("flex h-[10px] items-center gap-px pl-[2px]", dots)}>
            <svg viewBox="0 0 20 5" className="h-[5px] w-5 bg-[#eee]" aria-hidden="true">
              <path d="M0 4 L4 0 L8 4 Z M12 1 H20 L16 5 Z" fill="#34568c" />
            </svg>
          </div>
          <div className="flex flex-1">
            <MembersPanel />
            <div className={clsx("w-[7px] shrink-0", dots)} />
            <SelectionPanel />
          </div>
        </div>
      </div>
      <div className="flex shrink-0 justify-center gap-[5px] pt-[5px] pr-[2px] pb-[7px]">
        {[
          ["OK", <OkIcon />],
          ["Отмена", <CancelIcon />],
          ["Справка", <HelpIcon />],
        ].map(([label, icon]) => (
          <button key={label} type="button" className={clsx("flex h-[34px] items-center gap-[5px] px-[16px] font-bold", metalButton)}>
            {icon}
            {label}
          </button>
        ))}
      </div>
    </section>
  );
};

// ---------- desktop panel ----------

const launchers = [
  ["Окна", <WindowIcon />],
  ["Файлы", <FilesIcon />],
  ["Chrome", <ChromeIcon />],
  ["Терминал", <TerminalIcon />],
  ["JOSM", <JosmLogo size="size-5" />],
  ["Telegram", <TelegramIcon />],
  ["Чат", <ChatIcon />],
  ["Firefox", <FirefoxIcon size="size-[22px]" />],
];

const tasks = ["telegram", "firefox", "firefox", "firefox", "firefox", "firefox", "firefox", "firefox", "josm"];

const taskIcon = {
  telegram: <TelegramIcon />,
  firefox: <FirefoxIcon />,
  josm: <JosmLogo />,
};

const Taskbar = () => (
  <footer className="flex h-6 shrink-0 items-center bg-[#e2e2e2] text-black">
    <button type="button" aria-label="Меню" className="flex h-6 w-12 shrink-0 items-center justify-center bg-linear-to-b from-[#2f6ca8] to-[#7fb0dc]">
      <Svg size="size-6">
        <circle cx="12" cy="12" r="11" fill="#8fb4d6" />
        <path d="M1 9 Q10 6 14 9 L20 4 L16 12 L19 20 L12 14 L5 17 L9 12 Z" fill="#fff" />
      </Svg>
    </button>
    <div className="flex shrink-0 items-center gap-[3px] pl-2">
      {launchers.map(([name, icon]) => (
        <button key={name} type="button" aria-label={name} className="flex w-6 items-center justify-center">
          {icon}
        </button>
      ))}
    </div>
    <div className="flex min-w-0 flex-1 overflow-hidden pl-[14px]">
      {tasks.map((t, i) => (
        <button key={i} type="button" className="flex w-[46px] shrink-0 items-center gap-[2px]">
          {taskIcon[t]}
          <span className="text-sm">...</span>
        </button>
      ))}
    </div>
    <div className="flex shrink-0 items-center pr-[3px]">
      <svg viewBox="0 0 21 12" className="mr-[5px] h-3 w-[21px]" aria-hidden="true">
        <rect width="21" height="12" fill="#f6e6e8" />
        <path d="M0 .5 H21 M0 3.500 H21 M0 6.500 H21 M0 9.500 H21" stroke="#d0455a" strokeWidth="1.500" />
        <rect width="9" height="7" fill="#3a4c9c" />
      </svg>
      <svg viewBox="0 0 36 20" className="mr-1 h-5 w-9" aria-hidden="true">
        <rect width="36" height="20" fill="#000" />
        <path d="M0 20 V19 H7 L9 17 L11 18 L12 13 L13 18 L15 15 L17 18 L18 12 L19 17 L21 16 L22 11 L23 16 L25 13 L26 17 L28 12 L29 16 L31 14 L32 18 L34 16 L36 17 V20 Z" fill="#0fa30f" />
      </svg>
      <svg viewBox="0 0 20 20" className="mr-2 size-5" fill="none" aria-hidden="true">
        <path d="M1 7 H4 L9 2 V18 L4 13 H1 Z" fill="#555" />
        <path d="M11 7 Q13 10 11 13 M14 5 Q17 10 14 15 M16.500 3 Q21 10 16.500 17" stroke="#666" strokeWidth="1.300" />
      </svg>
      <svg viewBox="0 0 12 20" className="mr-[11px] h-5 w-3" fill="none" aria-hidden="true">
        <path d="M4 1 H8 V3 H4 Z" fill="#555" />
        <rect x="1.500" y="3" width="9" height="16" rx="1" stroke="#555" strokeWidth="1.500" />
        <path d="M8 5 L3.500 11 H6 L4 17 L9 10 H6.500 Z" fill="#444" />
      </svg>
      <svg viewBox="0 0 20 16" className="mr-2 h-4 w-5" fill="none" aria-hidden="true">
        <path d="M10 0 V4" stroke="#666" />
        <rect x="1" y="4" width="18" height="11" rx="1.500" stroke="#666" strokeWidth="1.300" />
        <path d="M3 7 H17 M3 9.500 H17" stroke="#666" strokeWidth="1.500" strokeDasharray="2 1" />
        <path d="M5 12.500 H15" stroke="#666" strokeWidth="1.500" />
      </svg>
      <svg viewBox="0 0 20 20" className="mr-[6px] size-5" aria-hidden="true">
        <path d="M1 15 H4 V19 H1 Z M5 12 H8 V19 H5 Z M9 9 H12 V19 H9 Z M13 5 H16 V19 H13 Z M16 2 H19 V19 H16 Z" fill="#3c6293" stroke="#25446f" strokeWidth="0.600" />
      </svg>
      <svg viewBox="0 0 20 20" className="mr-1 size-5" aria-hidden="true">
        <circle cx="10" cy="10" r="9.500" fill="#35a2da" />
        <path d="M4 9 L15 4 L13 10 L8 10 Z" fill="#fff" />
        <rect x="3" y="10" width="17" height="9" rx="3" fill="#8d989f" />
        <text x="11.500" y="17.500" textAnchor="middle" className="fill-white font-['DejaVu_Sans'] text-[7px]">
          192
        </text>
      </svg>
      <div className="mr-[6px] flex h-5 w-[65px]">
        <div className="w-2 border-y border-l border-black" />
        <div className="w-6 border border-white bg-[#93b4cf]" />
        <div className="flex-1 bg-[#9e9e9e]" />
      </div>
      <span className="mr-[7px] font-['Noto_Sans'] text-sm leading-5">11:23</span>
      <button type="button" aria-label="Выключить">
        <svg viewBox="0 0 18 18" className="size-[18px]" fill="none" stroke="#666" strokeWidth="1.800" aria-hidden="true">
          <path d="M9 1 V8 M5.500 3.500 A7 7 0 1 0 12.500 3.500" />
        </svg>
      </button>
    </div>
  </footer>
);

const App = () => {
  return (
    <div className="flex min-h-screen flex-col bg-[#eee] font-['DejaVu_Sans',sans-serif] text-xs leading-4">
      <main className="flex flex-1">
        <MainWindow />
        <RelationEditor />
      </main>
      <Taskbar />
    </div>
  );
};

export default App;
